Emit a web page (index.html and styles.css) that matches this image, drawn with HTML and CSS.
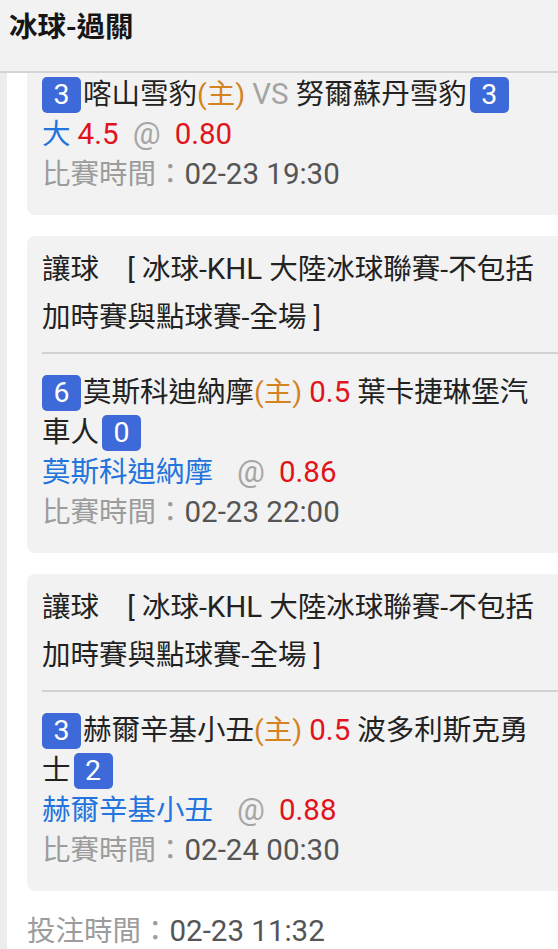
FILE: index.html
```html
<!DOCTYPE html>
<html lang="zh-Hant">
<head>
<meta charset="utf-8">
<title>冰球-過關</title>
<link rel="stylesheet" href="styles.css">
</head>
<body>
<header class="topbar">
  <h1 class="title">冰球-過關</h1>
</header>
<main class="main">
  <section class="card card-partial">
    <div class="card-body">
      <div class="row"><span class="badge">3</span>喀山雪豹<span class="home">(主)</span> <span class="vs">VS</span> 努爾蘇丹雪豹<span class="badge badge-after">3</span></div>
      <div class="row"><span class="pick">大</span> <span class="odds">4.5</span>&nbsp; <span class="at">@</span>&nbsp; <span class="odds">0.80</span></div>
      <div class="row"><span class="label">比賽時間：</span><span class="time">02-23 19:30</span></div>
    </div>
  </section>

  <section class="card">
    <div class="card-head">讓球&nbsp;&nbsp;&nbsp;&nbsp;[ 冰球-<span class="lat">KHL</span> 大陸冰球聯賽-不包括加時賽與點球賽-全場 ]</div>
    <div class="card-body">
      <div class="row"><span class="badge">6</span>莫斯科迪納摩<span class="home">(主)</span> <span class="odds">0.5</span> 葉卡捷琳堡汽車人<span class="badge badge-after">0</span></div>
      <div class="row"><span class="pick">莫斯科迪納摩</span><span class="at at-wide">@</span>&nbsp; <span class="odds">0.86</span></div>
      <div class="row"><span class="label">比賽時間：</span><span class="time">02-23 22:00</span></div>
    </div>
  </section>

  <section class="card">
    <div class="card-head">讓球&nbsp;&nbsp;&nbsp;&nbsp;[ 冰球-<span class="lat">KHL</span> 大陸冰球聯賽-不包括加時賽與點球賽-全場 ]</div>
    <div class="card-body">
      <div class="row"><span class="badge">3</span>赫爾辛基小丑<span class="home">(主)</span> <span class="odds">0.5</span> 波多利斯克勇士<span class="badge badge-after">2</span></div>
      <div class="row"><span class="pick">赫爾辛基小丑</span><span class="at at-wide">@</span>&nbsp; <span class="odds">0.88</span></div>
      <div class="row"><span class="label">比賽時間：</span><span class="time">02-24 00:30</span></div>
    </div>
  </section>

  <div class="bet-time"><span class="label">投注時間：</span><span class="time">02-23 11:32</span></div>
</main>
</body>
</html>
```

FILE: styles.css
```css
html, body {
  margin: 0;
  padding: 0;
}

body {
  background: #ededed;
  font-family: Roboto, "Noto Sans CJK TC", sans-serif;
  font-size: 28.5px;
  color: #222222;
  overflow: hidden;
  height: 949px;
}

.topbar {
  box-sizing: border-box;
  height: 73px;
  padding: 5px 9px 0;
  background: #f2f2f2;
  border-bottom: 2px solid #d4d4d4;
}

.title {
  margin: 0;
  font-family: "Noto Sans CJK TC", sans-serif;
  font-size: 28.5px;
  font-weight: 700;
  line-height: 40px;
  color: #161616;
}

.main {
  margin-left: 7px;
  background: #ffffff;
  height: 876px;
  overflow: hidden;
  padding-left: 20px;
}

.card {
  width: 560px;
  box-sizing: border-box;
  background: #f2f2f2;
  border-radius: 8px;
  margin-bottom: 21px;
  padding: 10px 0 20px 15px;
}

.card-partial {
  border-radius: 0 0 8px 8px;
  padding-top: 2px;
}

.card-head {
  line-height: 48px;
  padding-right: 36px;
  padding-bottom: 10px;
  border-bottom: 2px solid #d2d2d2;
  color: #222222;
}

.card-body {
  padding-top: 19px;
  padding-right: 36px;
}

.card-partial .card-body {
  padding-top: 0;
}

.row {
  line-height: 40px;
}

.lat,
.vs,
.odds,
.at,
.time {
  line-height: 1;
}

.lat {
  font-size: 29.5px;
}

.badge {
  display: inline-block;
  width: 39px;
  height: 36px;
  line-height: 36px;
  margin-right: 2px;
  border-radius: 5px;
  background: #3e69d8;
  color: #ffffff;
  text-align: center;
  font-family: Roboto, sans-serif;
}

.badge-after {
  margin-left: 3px;
  margin-right: 0;
}

.home {
  color: #d4831f;
}

.vs {
  color: #a3a3a3;
  font-size: 29.5px;
}

.pick {
  color: #2374dc;
}

.odds {
  color: #e0141c;
  font-size: 29.5px;
}

.at {
  color: #a6a6a6;
  font-size: 31px;
}

.at-wide {
  margin-left: 24px;
}

.label {
  color: #9c9c9c;
}

.time {
  color: #555555;
  font-size: 29.5px;
}

.bet-time {
  line-height: 40px;
}
```
